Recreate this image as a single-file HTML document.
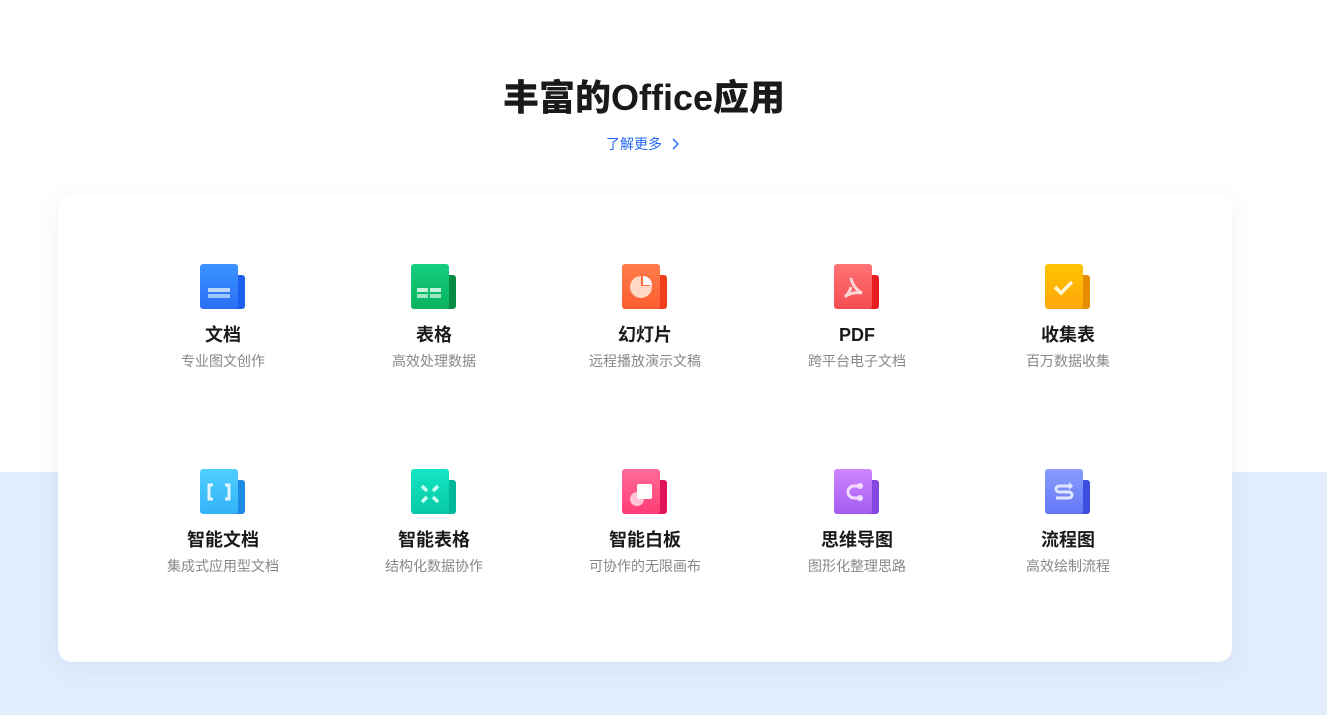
<!DOCTYPE html>
<html><head><meta charset="utf-8"><style>
*{margin:0;padding:0;box-sizing:border-box}
body{width:1327px;height:715px;overflow:hidden;background:#fff;font-family:"Liberation Sans","Noto Sans CJK SC",sans-serif;position:relative}
.bg{position:absolute;left:0;top:472px;width:1327px;height:243px;background:#e1edfd}
h1{position:absolute;top:74px;left:0;width:1288px;text-align:center;font-size:36px;font-weight:900;color:#1a1a1a;line-height:48px}
.more{position:absolute;top:134px;left:0;width:1286px;text-align:center;font-size:14px;color:#2468f2;line-height:20px}
.card{position:absolute;left:58px;top:194px;width:1174px;height:468px;background:#fff;border-radius:14px;box-shadow:0 6px 24px rgba(120,150,200,.12)}
.it{position:absolute;width:200px;text-align:center}
.ic{position:relative;width:46px;height:46px;margin:0 auto}
.ic .b{position:absolute;left:32px;top:11px;width:13px;height:34px;border-radius:0 3px 3px 0}
.ic .f{position:absolute;left:0;top:0;width:38px;height:45px;border-radius:3px;overflow:hidden}
.nm{margin-top:14px;font-size:18px;font-weight:700;color:#1a1a1a;line-height:22px}
.ds{margin-top:6px;font-size:14px;color:#888;line-height:19px}
</style></head><body>
<div class="bg"></div>
<h1>丰富的Office应用</h1>
<div class="more">了解更多 <svg width="10" height="12" viewBox="0 0 10 12" style="vertical-align:-1px;margin-left:4px"><path d="M3 1l5 5-5 5" fill="none" stroke="#2468f2" stroke-width="1.4"/></svg></div>
<div class="card"></div>

<div class="it" style="left:123px;top:264px"><div class="ic"><div class="b" style="background:#1b5ef0"></div><div class="f" style="background:linear-gradient(#3a93ff,#2a6ff5)"><div style="position:absolute;left:8px;top:24px;width:22px;height:4px;background:#bcd8ff"></div><div style="position:absolute;left:8px;top:30px;width:22px;height:4px;background:#9cc4ff"></div></div></div><div class="nm">文档</div><div class="ds">专业图文创作</div></div>

<div class="it" style="left:334px;top:264px"><div class="ic"><div class="b" style="background:#078a45"></div><div class="f" style="background:linear-gradient(#14cf7f,#0ab25f)"><div style="position:absolute;left:6px;top:24px;width:11px;height:4px;background:#c5f2da"></div><div style="position:absolute;left:19px;top:24px;width:11px;height:4px;background:#c5f2da"></div><div style="position:absolute;left:6px;top:30px;width:11px;height:4px;background:#9ee6c1"></div><div style="position:absolute;left:19px;top:30px;width:11px;height:4px;background:#9ee6c1"></div></div></div><div class="nm">表格</div><div class="ds">高效处理数据</div></div>

<div class="it" style="left:545px;top:264px"><div class="ic"><div class="b" style="background:#ee3e1e"></div><div class="f" style="background:linear-gradient(#ff7d4b,#fb5d2f)"><div style="position:absolute;left:8px;top:12px;width:22px;height:22px;border-radius:50%;background:#ffd8c6"></div><div style="position:absolute;left:19px;top:12px;width:9px;height:10px;background:#fb6a38"></div><div style="position:absolute;left:21px;top:12px;width:9px;height:9px;background:#fff;border-radius:0 9px 0 0"></div></div></div><div class="nm">幻灯片</div><div class="ds">远程播放演示文稿</div></div>

<div class="it" style="left:757px;top:264px"><div class="ic"><div class="b" style="background:#e81b1f"></div><div class="f" style="background:linear-gradient(#ff7375,#f44d50)"><svg width="38" height="45" viewBox="0 0 38 45"><path d="M17 14c1 6 5 12 11 15-6-1-13 0-17 4 3-3 5-6 6-10" fill="none" stroke="#ffd6d6" stroke-width="3"/></svg></div></div><div class="nm">PDF</div><div class="ds">跨平台电子文档</div></div>

<div class="it" style="left:968px;top:264px"><div class="ic"><div class="b" style="background:#e88c04"></div><div class="f" style="background:linear-gradient(#ffc300,#ffa80c)"><svg width="38" height="45" viewBox="0 0 38 45"><path d="M10 23l6 6 11-11" fill="none" stroke="#fff6d8" stroke-width="3.5"/></svg></div></div><div class="nm">收集表</div><div class="ds">百万数据收集</div></div>

<div class="it" style="left:123px;top:469px"><div class="ic"><div class="b" style="background:#1e8ae6"></div><div class="f" style="background:linear-gradient(#4fcfff,#33b3f8)"><svg width="38" height="45" viewBox="0 0 38 45"><path d="M13 16h-4v14h4M25 16h4v14h-4" fill="none" stroke="#e3f6ff" stroke-width="3"/></svg></div></div><div class="nm">智能文档</div><div class="ds">集成式应用型文档</div></div>

<div class="it" style="left:334px;top:469px"><div class="ic"><div class="b" style="background:#03b79a"></div><div class="f" style="background:linear-gradient(#14e6c4,#07c8a6)"><svg width="38" height="45" viewBox="0 0 38 45"><path d="M11 17l5 5M27 17l-5 5M11 33l5-5M27 33l-5-5" stroke="#c8fff2" stroke-width="3.5"/></svg></div></div><div class="nm">智能表格</div><div class="ds">结构化数据协作</div></div>

<div class="it" style="left:545px;top:469px"><div class="ic"><div class="b" style="background:#e0155a"></div><div class="f" style="background:linear-gradient(#ff6c98,#ff3b75)"><div style="position:absolute;left:8px;top:23px;width:14px;height:14px;border-radius:50%;background:#ffc3d5"></div><div style="position:absolute;left:15px;top:15px;width:15px;height:15px;background:#fff;border-radius:2px"></div></div></div><div class="nm">智能白板</div><div class="ds">可协作的无限画布</div></div>

<div class="it" style="left:757px;top:469px"><div class="ic"><div class="b" style="background:#8547e0"></div><div class="f" style="background:linear-gradient(#cf86ff,#a35cf0)"><svg width="38" height="45" viewBox="0 0 38 45"><path d="M26 17h-6a6 6 0 0 0 0 12h6" fill="none" stroke="#f0dcff" stroke-width="3"/><circle cx="26" cy="17" r="3" fill="#f0dcff"/><circle cx="26" cy="29" r="3" fill="#f0dcff"/></svg></div></div><div class="nm">思维导图</div><div class="ds">图形化整理思路</div></div>

<div class="it" style="left:968px;top:469px"><div class="ic"><div class="b" style="background:#3c4ee0"></div><div class="f" style="background:linear-gradient(#8a9cff,#6478f7)"><svg width="38" height="45" viewBox="0 0 38 45"><path d="M25 17h-11a3 3 0 0 0 0 6h10a3 3 0 0 1 0 6h-13" fill="none" stroke="#e2e7ff" stroke-width="3"/><path d="M24 13l4 4-4 4" fill="#e2e7ff"/></svg></div></div><div class="nm">流程图</div><div class="ds">高效绘制流程</div></div>
</body></html>
